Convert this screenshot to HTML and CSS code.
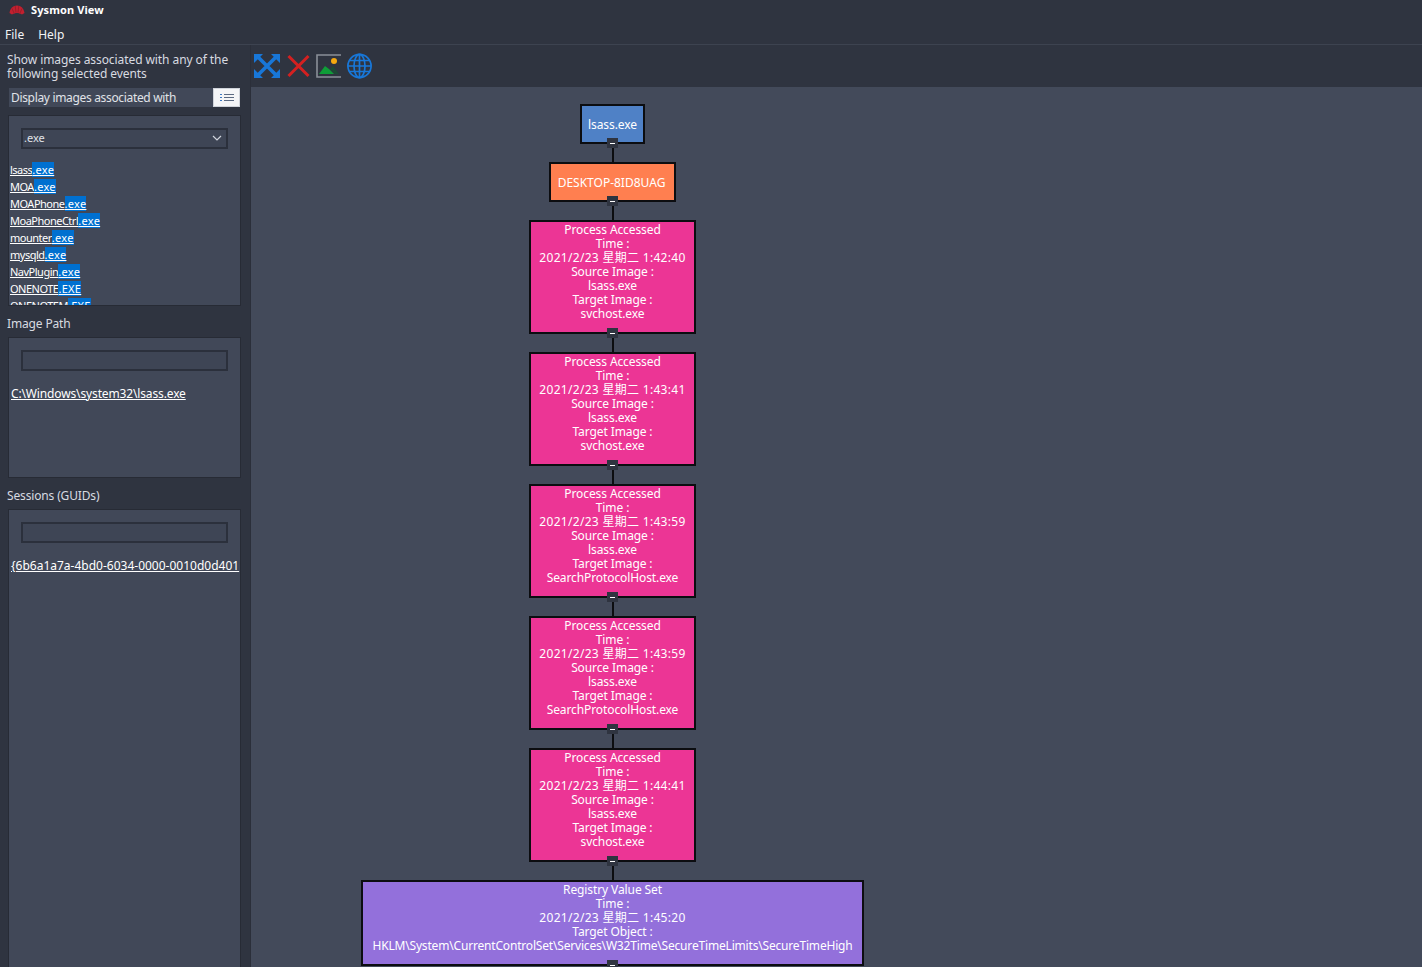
FILE: index.html
```html
<!DOCTYPE html>
<html lang="en">
<head>
  <meta charset="UTF-8" />
  <title>Sysmon View</title>
  <link rel="stylesheet" href="styles.css">
</head>
<body>
  <div class="titlebar">
    <svg class="app-logo" width="16" height="10" viewBox="0 0 16 10">
      <path d="M0.5 8 C1 3.5 4 0.5 8 0.5 C12 0.5 15 3.5 15.5 8 L13 9.5 C11 8.5 9.5 8 8 8 C6.5 8 5 8.5 3 9.5 Z" fill="#c1202f"/>
      <path d="M3 3.5 L5 8 M6.2 1 L7 7.5 M9.8 1 L9 7.5 M13 3.5 L11 8" stroke="#8c1a26" stroke-width="0.7"/>
    </svg>
    <span class="app-name">Sysmon View</span>
  </div>
  <div class="menubar">
    <span>File</span>
    <span>Help</span>
  </div>

  <div class="main">
    <div class="sidebar">
      <p class="intro">Show images associated with any of the following selected events</p>
      <div class="display-row">
        <span>Display images associated with</span>
        <button class="list-btn">
          <svg width="14" height="10" viewBox="0 0 14 10">
            <path d="M0 1.5h2M0 4.5h2M0 7.5h2" stroke="#3a78c4" stroke-width="1"/>
            <path d="M4 1.5h10M4 4.5h10M4 7.5h10" stroke="#5b6a82" stroke-width="1"/>
          </svg>
        </button>
      </div>

      <div class="panel panel-images">
        <div class="search-wrap">
          <div class="search">
            <span>.exe</span>
            <svg width="10" height="6" viewBox="0 0 10 6"><path d="M1 1l4 4 4-4" fill="none" stroke="#d0d4dc" stroke-width="1.2"/></svg>
          </div>
        </div>
        <ul class="hits">
          <li><a>lsass</a><mark>.exe</mark></li>
          <li><a>MOA</a><mark>.exe</mark></li>
          <li><a>MOAPhone</a><mark>.exe</mark></li>
          <li><a>MoaPhoneCtrl</a><mark>.exe</mark></li>
          <li><a>mounter</a><mark>.exe</mark></li>
          <li><a>mysqld</a><mark>.exe</mark></li>
          <li><a>NavPlugin</a><mark>.exe</mark></li>
          <li><a>ONENOTE</a><mark>.EXE</mark></li>
          <li><a>ONENOTEM</a><mark>.EXE</mark></li>
        </ul>
      </div>

      <div class="section-label">Image Path</div>
      <div class="panel panel-path">
        <div class="search-wrap"><div class="search"></div></div>
        <div class="link-line link-path"><a>C:\Windows\system32\lsass.exe</a></div>
      </div>

      <div class="section-label">Sessions (GUIDs)</div>
      <div class="panel panel-sessions">
        <div class="search-wrap"><div class="search"></div></div>
        <div class="link-line"><a>{6b6a1a7a-4bd0-6034-0000-0010d0d401</a></div>
      </div>
    </div>

    <div class="content">
      <div class="toolbar">
        <svg width="28" height="26" viewBox="0 0 28 26">
          <path d="M3 3L23 23M23 3L3 23" stroke="#1877d8" stroke-width="3.6"/>
          <path d="M0 1h9L0 10zM26 1h-9l9 9zM0 25h9L0 16zM26 25h-9l9-9z" fill="#1877d8"/>
        </svg>
        <svg width="24" height="24" viewBox="0 0 24 24">
          <path d="M1.5 2L21.5 22M21.5 2L1.5 22" stroke="#d42020" stroke-width="3"/>
        </svg>
        <svg width="26" height="24" viewBox="0 0 26 24">
          <path d="M25 1H1V23H25" fill="none" stroke="#8a8f98" stroke-width="1.6"/>
          <circle cx="18" cy="7" r="3" fill="#f5a80f"/>
          <path d="M3 20L9 12 L13 15 L18 20Z" fill="#0f9d38"/>
          <path d="M14 15L17 12 L23 20H19Z" fill="#1d4a35"/>
        </svg>
        <svg width="26" height="26" viewBox="0 0 26 26" fill="none" stroke="#1877d8" stroke-width="1.7">
          <circle cx="12.5" cy="13" r="11.6"/>
          <ellipse cx="12.5" cy="13" rx="5.5" ry="11.6"/>
          <path d="M12.5 1.4V24.6M1 13H24M2.5 7.5H22.5M2.5 18.5H22.5"/>
        </svg>
      </div>

      <div class="canvas">
        <div class="tree">
          <div class="node node-image">
            lsass.exe
            <span class="toggle"></span>
          </div>
          <div class="node node-host">
            DESKTOP-8ID8UAG
            <span class="toggle"></span>
          </div>
          <div class="node node-event">
            Process Accessed<br>Time :<br><span class="when">2021/2/23 星期二 1:42:40</span><br>Source Image :<br>lsass.exe<br>Target Image :<br>svchost.exe
            <span class="toggle"></span>
          </div>
          <div class="node node-event">
            Process Accessed<br>Time :<br><span class="when">2021/2/23 星期二 1:43:41</span><br>Source Image :<br>lsass.exe<br>Target Image :<br>svchost.exe
            <span class="toggle"></span>
          </div>
          <div class="node node-event">
            Process Accessed<br>Time :<br><span class="when">2021/2/23 星期二 1:43:59</span><br>Source Image :<br>lsass.exe<br>Target Image :<br>SearchProtocolHost.exe
            <span class="toggle"></span>
          </div>
          <div class="node node-event">
            Process Accessed<br>Time :<br><span class="when">2021/2/23 星期二 1:43:59</span><br>Source Image :<br>lsass.exe<br>Target Image :<br>SearchProtocolHost.exe
            <span class="toggle"></span>
          </div>
          <div class="node node-event">
            Process Accessed<br>Time :<br><span class="when">2021/2/23 星期二 1:44:41</span><br>Source Image :<br>lsass.exe<br>Target Image :<br>svchost.exe
            <span class="toggle"></span>
          </div>
          <div class="node node-registry">
            Registry Value Set<br>Time :<br><span class="when">2021/2/23 星期二 1:45:20</span><br>Target Object :<br><span class="reg-key">HKLM\System\CurrentControlSet\Services\W32Time\SecureTimeLimits\SecureTimeHigh</span>
            <span class="toggle"></span>
          </div>
        </div>
      </div>
    </div>
  </div>
</body>
</html>
```

FILE: styles.css
```css
* {
    box-sizing: border-box;
}

html, body {
    height: 100%;
}

body {
    margin: 0;
    overflow: hidden;
    display: flex;
    flex-direction: column;
    background-color: #2f3440;
    color: #e8eaee;
    font-family: "Noto Sans", "Noto Sans CJK SC", sans-serif;
    font-size: 12px;
}

.titlebar {
    height: 20px;
    display: flex;
    align-items: center;
    padding: 0 0 1px 9px;
    gap: 6px;
    flex: none;
}

.app-name {
    color: #fff;
    font-weight: 700;
    font-size: 11px;
    letter-spacing: 0.1px;
}

.menubar {
    height: 25px;
    display: flex;
    align-items: center;
    gap: 14px;
    padding: 5px 0 0 5px;
    border-bottom: 1px solid #3d4350;
    font-size: 12px;
    color: #f2f3f5;
    flex: none;
}

.main {
    flex: 1;
    display: flex;
    min-height: 0;
}

.sidebar {
    width: 251px;
    flex: none;
    padding: 8px 9px 0 8px;
    border-right: 1px solid #2b2f3a;
    overflow: hidden;
    display: flex;
    flex-direction: column;
}

.intro {
    margin: 0 0 0 -1px;
    line-height: 14px;
    height: 28px;
    flex: none;
    letter-spacing: -0.08px;
    color: #d8dbe1;
}

.display-row {
    margin: 7px 1px 0 1px;
    height: 19px;
    flex: none;
    display: flex;
    justify-content: space-between;
    align-items: center;
    padding-left: 2px;
    background-color: #414858;
    letter-spacing: -0.33px;
    color: #e0e3e8;
}

.list-btn {
    width: 27px;
    height: 19px;
    padding: 0;
    border: 1px solid #cfd3da;
    background-color: #f4f5f7;
    display: flex;
    align-items: center;
    justify-content: center;
}

.panel {
    background-color: #414858;
    border: 1px solid #272b35;
    overflow: hidden;
    flex: none;
}

.panel-images {
    margin-top: 8px;
    height: 191px;
}

.panel-path {
    height: 141px;
}

.panel-sessions {
    height: 470px;
}

.search-wrap {
    height: 46px;
    padding: 12px 12px 0 12px;
}

.search {
    height: 21px;
    border: 2px solid #2b303c;
    background-color: #3e4555;
    display: flex;
    align-items: center;
    justify-content: space-between;
    padding: 0 4px 2px 1px;
    font-size: 11px;
    color: #e0e3e8;
}

.hits {
    list-style: none;
    margin: -1px 0 0 0;
    padding: 0 0 0 1px;
    font-size: 11px;
}

.hits li {
    height: 17px;
    line-height: 17px;
    white-space: nowrap;
}

.hits a {
    letter-spacing: -0.5px;
}

.hits a, .link-line a {
    color: #fff;
    text-decoration: underline;
}

.hits mark {
    background-color: #0070d0;
    color: #fff;
    letter-spacing: 0.3px;
    text-decoration: underline;
}

.section-label {
    height: 31px;
    flex: none;
    padding-top: 10px;
    line-height: 16px;
    margin-left: -1px;
    letter-spacing: -0.15px;
    color: #d8dbe1;
}

.link-line {
    padding: 2px 0 0 2px;
    line-height: 16px;
    white-space: nowrap;
}

.link-path {
    letter-spacing: -0.14px;
}

.content {
    flex: 1;
    display: flex;
    flex-direction: column;
    min-width: 0;
}

.toolbar {
    height: 42px;
    flex: none;
    display: flex;
    align-items: center;
    gap: 5px;
    padding-left: 3px;
}

.canvas {
    flex: 1;
    background-color: #434a5a;
    padding: 17px 0 0 110px;
    overflow: hidden;
}

.tree {
    width: 503px;
    display: flex;
    flex-direction: column;
    align-items: center;
    gap: 18px;
}

.node {
    position: relative;
    flex: none;
    border: 2px solid #0c0d10;
    color: #fff;
    text-align: center;
    line-height: 14px;
    letter-spacing: -0.1px;
    white-space: nowrap;
}

/* connector down to the next node */
.node::after {
    content: "";
    position: absolute;
    left: 50%;
    bottom: -20px;
    width: 2px;
    height: 18px;
    margin-left: -1px;
    background-color: #0c0d10;
}

.node-image {
    width: 65px;
    height: 40px;
    line-height: 37px;
    background-color: #4f81c6;
}

.node-host {
    width: 127px;
    height: 40px;
    line-height: 37px;
    padding-right: 2px;
    letter-spacing: 0;
    background-color: #ff7f50;
}

.node-event {
    width: 167px;
    height: 114px;
    padding-top: 1px;
    background-color: #ec3595;
}

.node-registry {
    width: 503px;
    height: 86px;
    padding-top: 1px;
    background-color: #9370db;
}

.when {
    letter-spacing: 0.3px;
}

.reg-key {
    letter-spacing: -0.18px;
}

.toggle {
    position: absolute;
    left: 50%;
    bottom: -6px;
    width: 11px;
    height: 10px;
    margin-left: -5.5px;
    background-color: #2f3440;
    z-index: 1;
}

.toggle::after {
    content: "";
    position: absolute;
    left: 3px;
    top: 5px;
    width: 5px;
    height: 1px;
    background-color: #fff;
}
```
